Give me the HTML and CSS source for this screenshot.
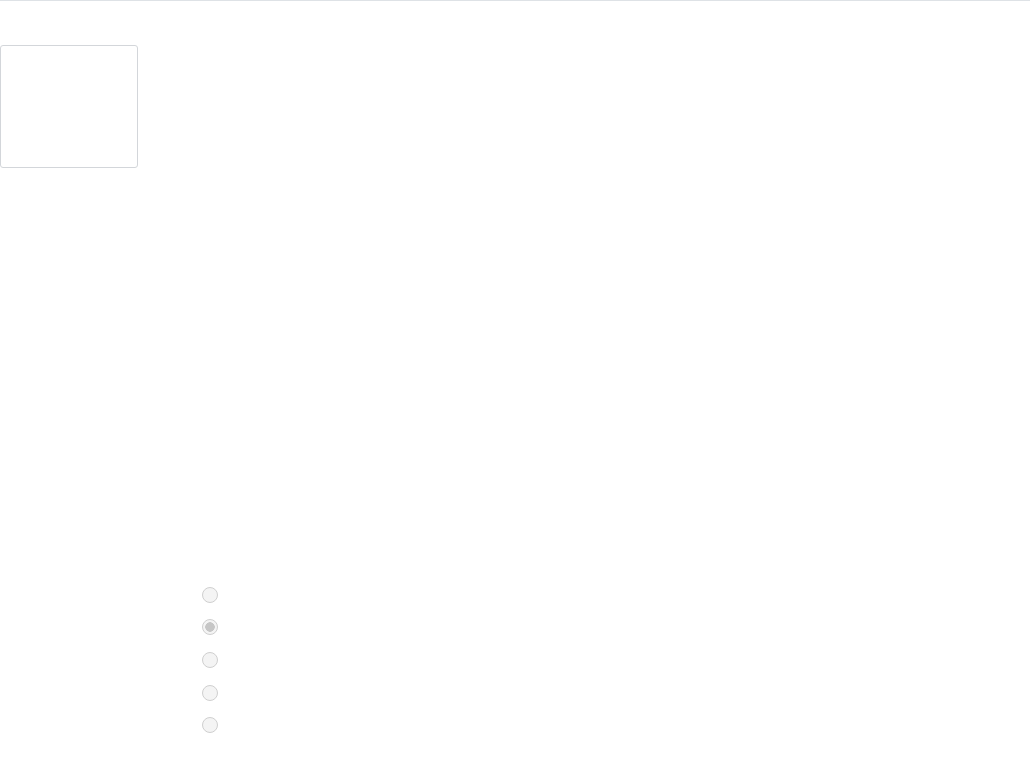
FILE: index.html
```html
<!DOCTYPE html>
<html lang="en">
<head>
  <meta charset="UTF-8">
  <meta name="viewport" content="width=device-width, initial-scale=1.0">
  <title>Form</title>
  <link rel="stylesheet" href="styles.css">
</head>
<body>
  <div id="page">
    <div class="preview-box"></div>

    <div class="radio-list">
      <label class="radio-row"><input type="radio" name="opt" disabled></label>
      <label class="radio-row"><input type="radio" name="opt" checked disabled></label>
      <label class="radio-row"><input type="radio" name="opt" disabled></label>
      <label class="radio-row"><input type="radio" name="opt" disabled></label>
      <label class="radio-row"><input type="radio" name="opt" disabled></label>
    </div>
  </div>
</body>
</html>
```

FILE: styles.css
```css
body {
  font-family: 'Liberation Sans', Arial, sans-serif;
  margin: 0;
  padding: 0;
  background-color: #ffffff;
  color: #333;
}

#page {
  border-top: 1px solid #dee2e6;
  padding-top: 44px;
  min-height: 720px;
}

.preview-box {
  width: 136px;
  height: 121px;
  border: 1px solid #d3d6da;
  border-radius: 3px;
}

.radio-list {
  display: flex;
  flex-direction: column;
  margin-top: 419px;
  padding-left: 202px;
}

.radio-row {
  display: flex;
  align-items: center;
  height: 16px;
  margin-top: 16px;
}

.radio-row:first-child {
  margin-top: 0;
}

.radio-row:nth-child(3),
.radio-row:nth-child(4) {
  margin-top: 17px;
}

.radio-row input {
  appearance: none;
  -webkit-appearance: none;
  box-sizing: border-box;
  width: 16px;
  height: 16px;
  margin: 0;
  border: 1.5px solid #cfcfcf;
  border-radius: 50%;
  background-color: #f4f4f4;
}

.radio-row input:checked {
  background: radial-gradient(circle, #c6c6c6 0 4.5px, #f4f4f4 5px);
}
```
